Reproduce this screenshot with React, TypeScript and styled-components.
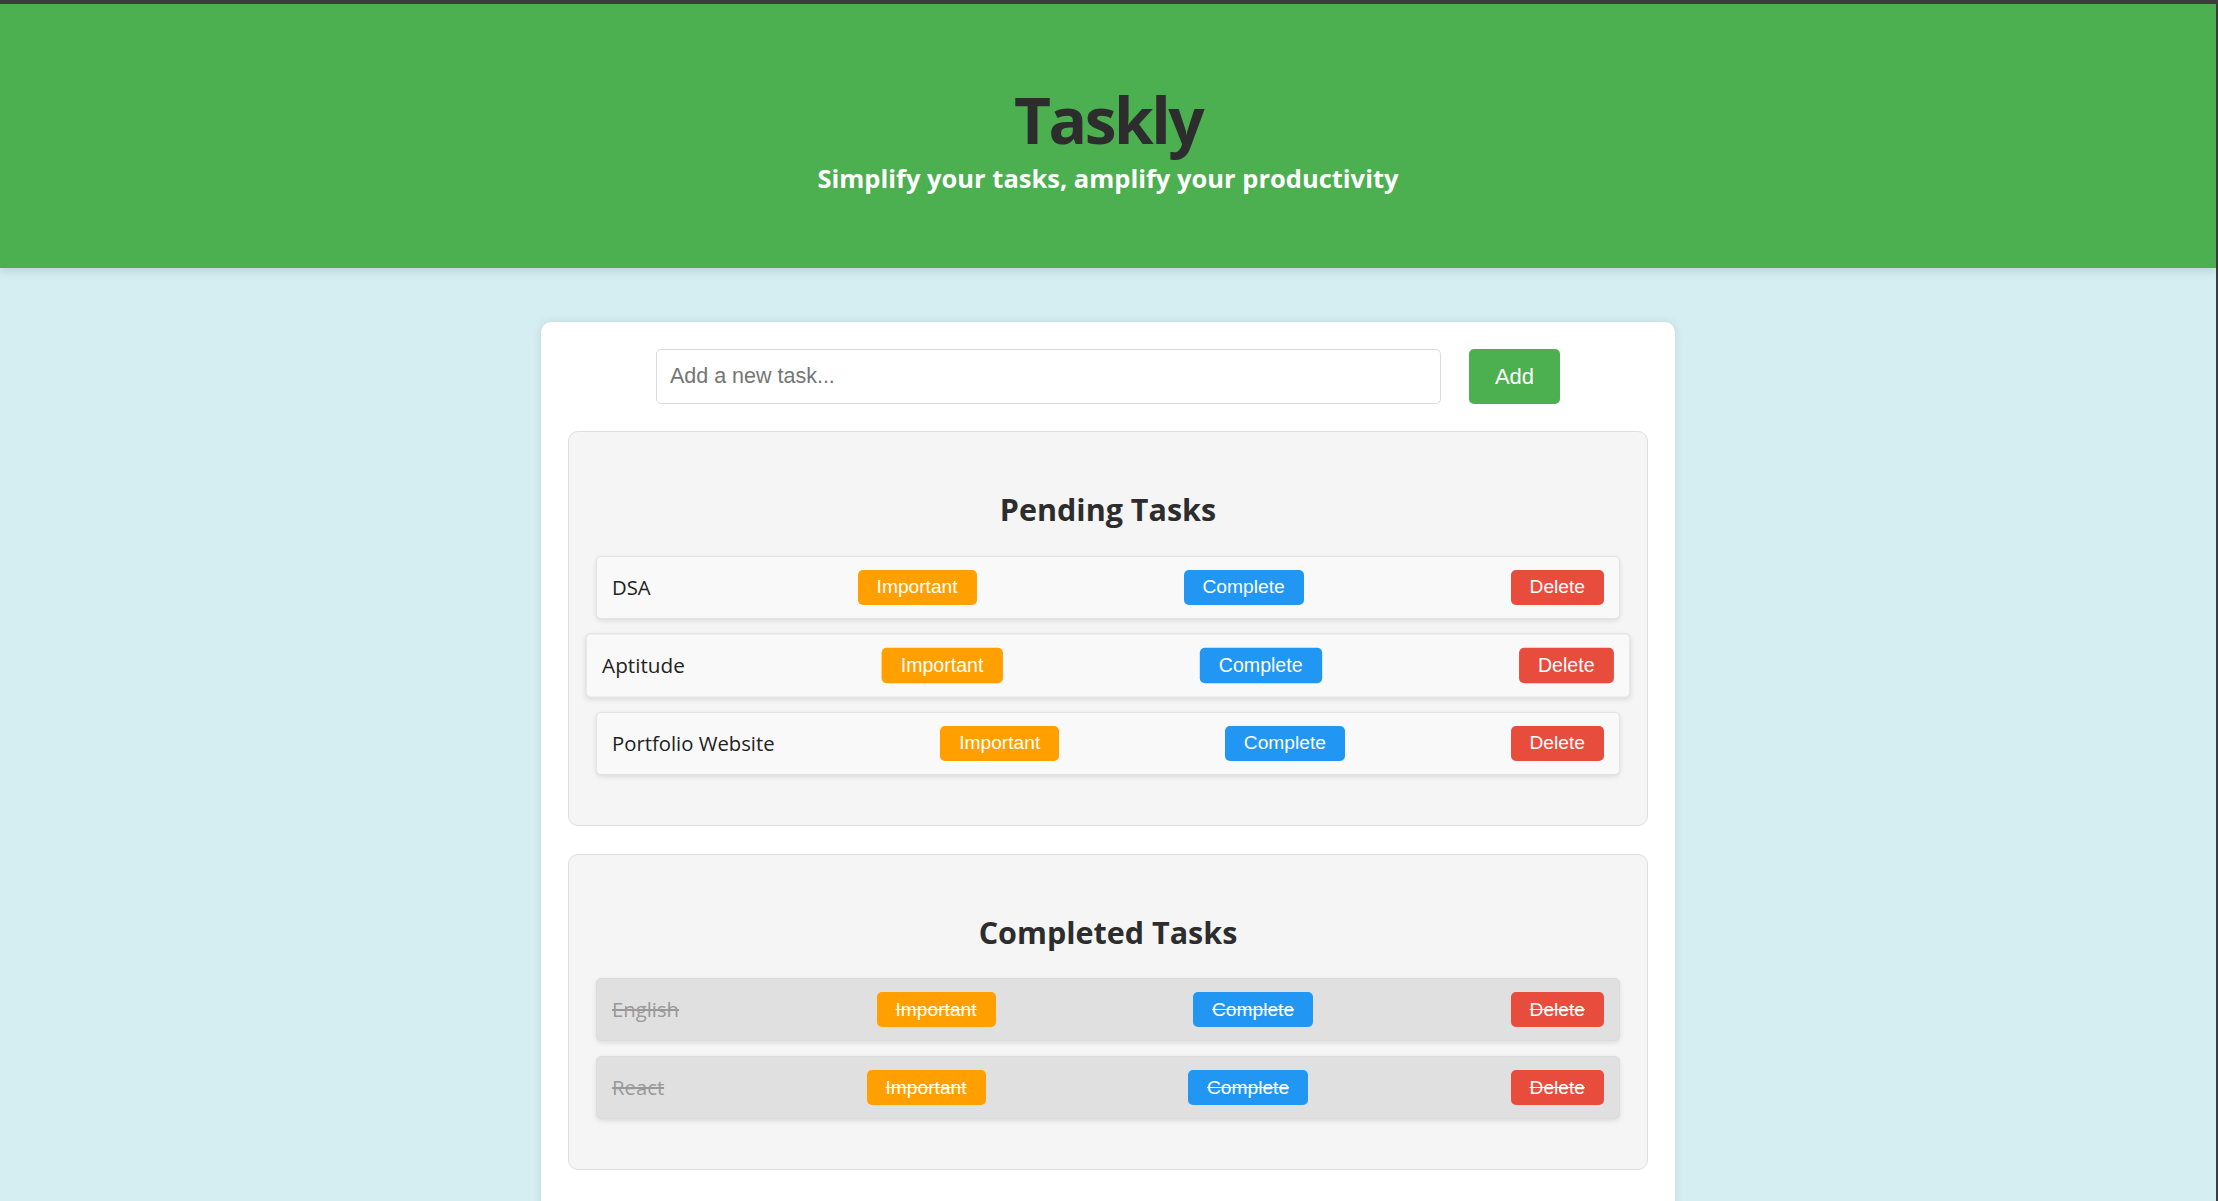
import React from "react";
import styled, { createGlobalStyle } from "styled-components";

type Task = { id: number; title: string };

const pending: Task[] = [
  { id: 1, title: "DSA" },
  { id: 2, title: "Aptitude" },
  { id: 3, title: "Portfolio Website" },
];

const completed: Task[] = [
  { id: 4, title: "English" },
  { id: 5, title: "React" },
];

// the row the pointer rests on in the screenshot
const HOVERED_ID = 2;

const TaskRow = ({ task, done }: { task: Task; done?: boolean }) => (
  <Row $done={done} $lifted={task.id === HOVERED_ID}>
    <RowText>{task.title}</RowText>
    <ActionButton $tone="#ff9f00">Important</ActionButton>
    <ActionButton $tone="#2196f3">Complete</ActionButton>
    <ActionButton $tone="#e74c3c">Delete</ActionButton>
  </Row>
);

export default function App() {
  return (
    <Page>
      <GlobalStyle />
      <Header>
        <Title>Taskly</Title>
        <Tagline>Simplify your tasks, amplify your productivity</Tagline>
      </Header>
      <Card>
        <AddForm onSubmit={(e) => e.preventDefault()}>
          <TaskInput type="text" placeholder="Add a new task..." />
          <AddButton type="submit">Add</AddButton>
        </AddForm>

        <Section>
          <SectionTitle>Pending Tasks</SectionTitle>
          <List>
            {pending.map((t) => (
              <TaskRow key={t.id} task={t} />
            ))}
          </List>
        </Section>

        <Section>
          <SectionTitle>Completed Tasks</SectionTitle>
          <List>
            {completed.map((t) => (
              <TaskRow key={t.id} task={t} done />
            ))}
          </List>
        </Section>
      </Card>
    </Page>
  );
}

const GlobalStyle = createGlobalStyle`
  * {
    box-sizing: border-box;
  }
  html, body {
    margin: 0;
    padding: 0;
  }
  body {
    background: #d4eef2;
    font-family: "Open Sans", "Noto Sans", sans-serif;
    overflow: hidden;
  }
`;

const Page = styled.div`
  min-height: 100vh;
  border-top: 4px solid #3b3e3c;
  border-right: 2px solid #3b3e3c;
  padding-bottom: 40px;
`;

const Header = styled.header`
  height: 264px;
  padding-top: 84px;
  background: #4caf50;
  text-align: center;
  box-shadow: 0 4px 8px rgba(0, 0, 0, 0.1);
`;

const Title = styled.h1`
  margin: 0;
  font-size: 64px;
  line-height: 1;
  font-weight: 700;
  letter-spacing: -2.5px;
  color: #2d2d2d;
`;

const Tagline = styled.p`
  margin: 14px 0 0;
  font-size: 25.5px;
  line-height: 1;
  font-weight: 700;
  color: #fff;
`;

const Card = styled.main`
  width: 1134px;
  margin: 54px auto 0;
  padding: 27px 27px 48px;
  background: #fff;
  border-radius: 10px;
  box-shadow: 0 0 10px rgba(0, 0, 0, 0.1);
  display: flex;
  flex-direction: column;
  gap: 28px;
`;

const AddForm = styled.form`
  display: flex;
  justify-content: center;
  gap: 28px;
  margin-bottom: -1px;
`;

const TaskInput = styled.input`
  width: 785px;
  height: 55px;
  padding: 0 13px;
  border: 1px solid #dcdcdc;
  border-radius: 5px;
  font-family: "Liberation Sans", Arial, sans-serif;
  font-size: 21.5px;
  color: #333;
  outline: none;

  ::placeholder {
    color: #767676;
  }
`;

const AddButton = styled.button`
  height: 55px;
  padding: 0 26px;
  border: none;
  border-radius: 5px;
  background: #4caf50;
  color: #fff;
  font-family: "Liberation Sans", Arial, sans-serif;
  font-size: 22px;
  cursor: pointer;
`;

const Section = styled.section`
  background: #f5f5f5;
  border: 1px solid #dedede;
  border-radius: 10px;
  padding: 0 27px 50px;
`;

const SectionTitle = styled.h2`
  margin: 62px 0 31px;
  font-size: 30.5px;
  line-height: 1;
  font-weight: 700;
  text-align: center;
  color: #2d2d2d;
`;

const List = styled.div`
  display: flex;
  flex-direction: column;
  gap: 15px;
`;

const Row = styled.div<{ $done?: boolean; $lifted?: boolean }>`
  display: flex;
  justify-content: space-between;
  align-items: center;
  padding: 13px 15px;
  border: 1px solid ${(p) => (p.$done ? "#dcdcdc" : "#e3e3e3")};
  border-radius: 5px;
  background: ${(p) => (p.$done ? "#e0e0e0" : "#f9f9f9")};
  box-shadow: 0 2px 5px rgba(0, 0, 0, 0.1);
  color: ${(p) => (p.$done ? "#999" : "#222")};
  text-decoration: ${(p) => (p.$done ? "line-through" : "none")};
  transform: ${(p) => (p.$lifted ? "scale(1.02)" : "none")};
`;

const RowText = styled.span`
  font-size: 20.3px;
  line-height: 1.2;
`;

const ActionButton = styled.button<{ $tone: string }>`
  height: 35px;
  padding: 0 19px;
  border: none;
  border-radius: 5px;
  background: ${(p) => p.$tone};
  color: #fff;
  font-family: "Liberation Sans", Arial, sans-serif;
  font-size: 19.2px;
  text-decoration: inherit;
  cursor: pointer;
`;
